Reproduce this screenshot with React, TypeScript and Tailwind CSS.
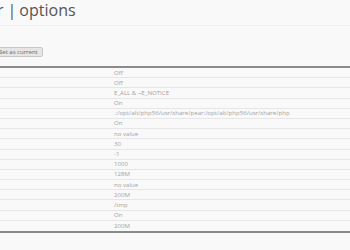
const ROWS = [
  'Off',
  'Off',
  'E_ALL & ~E_NOTICE',
  'On',
  '.:/opt/alt/php56/usr/share/pear:/opt/alt/php56/usr/share/php',
  'On',
  'no value',
  '30',
  '-1',
  '1000',
  '128M',
  'no value',
  '200M',
  '/tmp',
  'On',
  '200M',
]

export default function App() {
  return (
    <div className="w-[350px] h-[250px] overflow-hidden bg-[#f9f9f9] text-[#a3a3a3] font-['Open_Sans',sans-serif]">
      <div className="h-[26px] border-b border-[#efefef] relative overflow-hidden">
        <h1 className="absolute left-[-3px] top-[0px] flex text-[16px] leading-[20px] text-[#555] whitespace-nowrap">
          <span>r</span>
          <span className="ml-[4px]">|</span>
          <span className="ml-[3px]">options</span>
        </h1>
      </div>
      <div className="h-[40px] pt-[21px] flex items-start">
        <button className="ml-[-6px] h-[10px] px-[4px] border border-[#c8c8c8] rounded-[2px] bg-[#e6e6e6] text-[6px] leading-[8px] text-[#666] whitespace-nowrap">
          Set as current
        </button>
      </div>
      <div className="border-t-2 border-b-2 border-[#8a8a8a]">
        {ROWS.map((v, i) => (
          <div
            key={i}
            className="flex h-[10.2px] items-center border-b border-[#e6e6e6] last:border-b-0"
          >
            <div className="w-[114px] shrink-0" />
            <div className="text-[6.1px] leading-none whitespace-nowrap">{v}</div>
          </div>
        ))}
      </div>
    </div>
  )
}
